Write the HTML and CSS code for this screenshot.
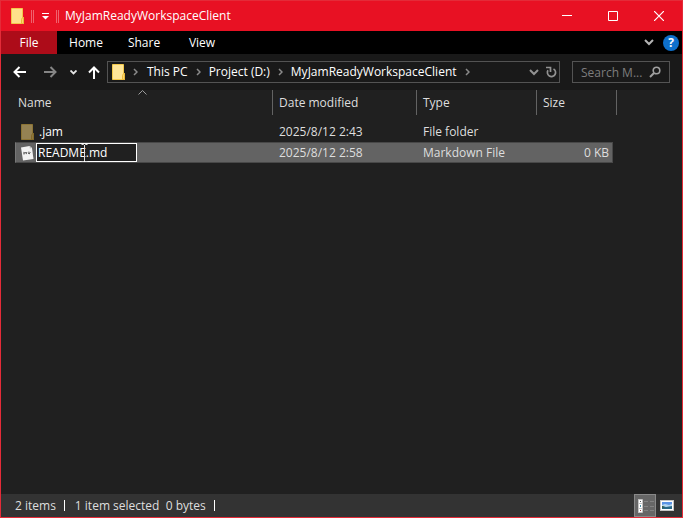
FILE: index.html
```html
<!DOCTYPE html>
<html lang="en">
<head>
<meta charset="utf-8">
<title>MyJamReadyWorkspaceClient</title>
<link rel="stylesheet" href="styles.css">
</head>
<body>
<div class="window">
  <header class="titlebar">
    <svg class="folder" width="14" height="16" viewBox="0 0 14 16" aria-hidden="true"><path d="M.5.5h11v9h1v6H.5z" fill="#ffe08a" stroke="#f3c94b"/><path d="M11.5 9.5h1v6h-2v-4z" fill="#ffd66a" stroke="#e9b93a"/></svg>
    <span class="grip"></span>
    <button class="quick" aria-label="Customize Quick Access Toolbar"><svg width="9" height="8" viewBox="0 0 9 8"><path d="M1 1.500h7" stroke="#fff"/><path d="M1 4h7L4.500 7.500z" fill="#fff"/></svg></button>
    <span class="grip"></span>
    <h1 class="title">MyJamReadyWorkspaceClient</h1>
    <div class="captions">
      <button class="caption" aria-label="Minimize"><svg width="10" height="10" viewBox="0 0 10 10"><path d="M0 4.500h10" stroke="#fff"/></svg></button>
      <button class="caption" aria-label="Maximize"><svg width="10" height="10" viewBox="0 0 10 10"><path d="M.5.5h9v9h-9z" fill="none" stroke="#fff"/></svg></button>
      <button class="caption" aria-label="Close"><svg width="10" height="10" viewBox="0 0 10 10"><path d="M0 0l10 10M10 0L0 10" stroke="#fff" stroke-width="1.200"/></svg></button>
    </div>
  </header>

  <nav class="ribbon">
    <button class="tab tab-file">File</button>
    <button class="tab">Home</button>
    <button class="tab">Share</button>
    <button class="tab">View</button>
    <div class="ribbon-tools">
      <button class="icon" aria-label="Expand the ribbon"><svg width="10" height="7" viewBox="0 0 10 7"><path d="M1 1l4 4 4-4" fill="none" stroke="#b4b4b4" stroke-width="2"/></svg></button>
      <button class="help" aria-label="Help">?</button>
    </div>
  </nav>

  <div class="navbar">
    <button class="icon arrow" aria-label="Back"><svg width="14" height="12" viewBox="0 0 14 12"><path d="M13 6H2M6.500 1l-5 5 5 5" fill="none" stroke="#fff" stroke-width="2"/></svg></button>
    <button class="icon arrow" aria-label="Forward"><svg width="14" height="12" viewBox="0 0 14 12"><path d="M1 6h11M7.500 1l5 5-5 5" fill="none" stroke="#858585" stroke-width="2"/></svg></button>
    <button class="icon recent" aria-label="Recent locations"><svg width="7" height="5" viewBox="0 0 7 5"><path d="M.5.5l3 3 3-3" fill="none" stroke="#e6e6e6" stroke-width="1.800"/></svg></button>
    <button class="icon up" aria-label="Up"><svg width="12" height="13" viewBox="0 0 12 13"><path d="M6 13V2M1 6.500l5-5 5 5" fill="none" stroke="#fff" stroke-width="2"/></svg></button>
    <div class="address">
      <svg class="folder" width="14" height="16" viewBox="0 0 14 16" aria-hidden="true"><path d="M.5.5h11v9h1v6H.5z" fill="#ffe699" stroke="#f3c94b"/><path d="M11.500 9.500h1v6h-2v-4z" fill="#ffd66a" stroke="#e9b93a"/></svg>
      <svg class="sep" width="5" height="8" viewBox="0 0 5 8"><path d="M1 1l3 3-3 3" fill="none" stroke="#8a8a8a" stroke-width="1.500"/></svg>
      <a href="#">This PC</a>
      <svg class="sep" width="5" height="8" viewBox="0 0 5 8"><path d="M1 1l3 3-3 3" fill="none" stroke="#8a8a8a" stroke-width="1.500"/></svg>
      <a href="#">Project (D:)</a>
      <svg class="sep" width="5" height="8" viewBox="0 0 5 8"><path d="M1 1l3 3-3 3" fill="none" stroke="#8a8a8a" stroke-width="1.500"/></svg>
      <a href="#">MyJamReadyWorkspaceClient</a>
      <svg class="sep" width="5" height="8" viewBox="0 0 5 8"><path d="M1 1l3 3-3 3" fill="none" stroke="#8a8a8a" stroke-width="1.500"/></svg>
      <div class="address-tools">
        <button class="icon" aria-label="Previous locations"><svg width="10" height="7" viewBox="0 0 10 7"><path d="M1 1l4 4 4-4" fill="none" stroke="#929292" stroke-width="2"/></svg></button>
        <button class="icon" aria-label="Refresh"><svg width="11" height="12" viewBox="0 0 11 12"><path d="M7.500 2.900a4.100 4.100 0 1 1-5.500 1.400" fill="none" stroke="#929292" stroke-width="1.700"/><path d="M0 1.500h4.500v4.500" fill="none" stroke="#929292" stroke-width="1.700"/></svg></button>
      </div>
    </div>
    <div class="search">
      <input type="text" placeholder="Search M..." aria-label="Search MyJamReadyWorkspaceClient">
      <svg width="12" height="12" viewBox="0 0 12 12" aria-hidden="true"><circle cx="7.500" cy="4.500" r="3.300" fill="none" stroke="#a0a0a0" stroke-width="1.600"/><path d="M5 7L1 11" stroke="#a0a0a0" stroke-width="1.900"/></svg>
    </div>
  </div>

  <main class="content">
    <table class="files">
      <colgroup><col class="c-name"><col class="c-date"><col class="c-type"><col class="c-size"><col class="c-edge"></colgroup>
      <thead>
        <tr>
          <th class="sorted">Name<svg class="sort" width="9" height="5" viewBox="0 0 9 5"><path d="M.5 4.500l4-4 4 4" fill="none" stroke="#9c9c9c"/></svg></th>
          <th>Date modified</th>
          <th>Type</th>
          <th colspan="2">Size</th>
        </tr>
      </thead>
      <tbody>
        <tr>
          <td><div class="file"><svg class="file-icon" width="14" height="16" viewBox="0 0 14 16" aria-hidden="true"><path d="M1.500.5h11v9h1v6h-12z" fill="#958253" stroke="#8c7434"/><path d="M12.500 9.500h1v6h-2v-4z" fill="#8d7740" stroke="#836a29"/></svg><span class="file-name">.jam</span></div></td>
          <td>2025/8/12 2:43</td>
          <td>File folder</td>
          <td class="size"></td>
          <td class="edge"></td>
        </tr>
        <tr class="selected">
          <td><div class="file"><svg class="file-icon" width="14" height="16" viewBox="0 0 14 16" aria-hidden="true"><path d="M1 2.500L9.500 1 12 3l1.500 11L3 15.500z" fill="#f2f2f2"/><path d="M9.500 1L12 3l-2.200.4z" fill="#bdbdbd"/><path d="M4 9.500l-.2-2.200 1.300 1 1.100-1.300.2 2.100M8.900 6.600l.3 2.200M7.800 7.700l1.400 1.200 1.200-1.500" fill="none" stroke="#555"/></svg><span class="rename"><input type="text" value="README.md" aria-label="File name"><svg class="ibeam" width="7" height="18" viewBox="0 0 7 18" aria-hidden="true"><path d="M.5.5h2l1 1 1-1h2M3.500 1v16M.5 17.500h2l1-1 1 1h2" fill="none" stroke="#dedede"/></svg></span></div></td>
          <td>2025/8/12 2:58</td>
          <td>Markdown File</td>
          <td class="size">0 KB</td>
          <td class="edge"></td>
        </tr>
      </tbody>
    </table>
  </main>

  <footer class="status">
    <span class="status-item">2 items</span>
    <span class="status-item">1 item selected&nbsp; 0 bytes</span>
    <div class="views">
      <button class="view view-on" aria-label="Details view"><svg width="18" height="14" viewBox="0 0 18 14"><path d="M2 .5h4v13H2z" fill="#fff"/><path d="M2.500.5h4v13h-4zM2 4.500h5M2 9.500h5" fill="none" stroke="#c4c4c4"/><path d="M4 2h1v1H4z" fill="#555"/><path d="M4 6h1v2H4z" fill="#4b91a8"/><path d="M4 11h1v1H4z" fill="#963b3b"/><path d="M8 2.500h4M14 2.500h4M8 7.500h4M14 7.500h4M8 11.500h4M14 11.500h4" stroke="#828282"/></svg></button>
      <button class="view" aria-label="Large icons view"><svg width="14" height="11" viewBox="0 0 14 11"><path d="M0 0h14v11H0z" fill="#c4c4c4"/><path d="M1 1h12v9H1z" fill="#fff"/><path d="M2 2h10v3H2z" fill="#5a93e5"/><path d="M2 5l3-1 4 1 3-1v3H2z" fill="#b4d6ef"/><path d="M2 6l4 1 6-1v3H2z" fill="#286887"/><path d="M2 6l3 1-3 1z" fill="#355942"/></svg></button>
    </div>
  </footer>
</div>
</body>
</html>
```
FILE: styles.css
```css
* { box-sizing: border-box; }

body {
  margin: 0;
  color: #fff;
  background: #202020;
  font: 12px/16px "Segoe UI", "Open Sans", "Noto Sans", sans-serif;
}

button, input {
  margin: 0;
  padding: 0;
  border: 0;
  background: none;
  color: inherit;
  font: inherit;
}

svg { display: block; flex: none; }

.window {
  display: flex;
  flex-direction: column;
  min-height: 100vh;
  border: 1px solid #e42b38;
}

.titlebar {
  display: flex;
  align-items: center;
  height: 30px;
  padding-left: 10px;
  background: #e81123;
}

.grip {
  width: 3px;
  height: 13px;
  margin-left: 6px;
  border: solid #f0626d;
  border-width: 0 1px;
}

.quick { margin-left: 7px; }

.title {
  margin: 0 0 0 6px;
  font-size: 12px;
  font-weight: 400;
}

.captions { display: flex; align-self: stretch; margin-left: auto; }

.caption {
  display: flex;
  align-items: center;
  justify-content: center;
  width: 46px;
}

.ribbon {
  display: flex;
  height: 23px;
  background: #000;
}

.tab { width: 58px; }
.tab-file { width: 56px; background: #ad0c19; }

.ribbon-tools {
  display: flex;
  align-items: center;
  gap: 9px;
  margin-left: auto;
  padding-right: 3px;
}

.help {
  width: 16px;
  height: 16px;
  border-radius: 50%;
  background: #0e70cb;
  font-weight: 700;
  text-align: center;
}

.navbar {
  display: flex;
  align-items: center;
  height: 36px;
  padding: 0 12px;
  background: #191919;
}

.arrow { margin-right: 16px; }
.recent { margin: 0 11px 0 -3px; }
.up { margin-right: 7px; }

.address {
  display: flex;
  flex: 1;
  align-items: center;
  height: 22px;
  padding-left: 4px;
  border: 1px solid #535353;
}

.address a { color: #fff; text-decoration: none; }
.sep { margin: 0 8px; }
.address .folder + .sep { margin: 0 9px 0 7px; }

.address-tools {
  display: flex;
  align-items: center;
  gap: 7px;
  margin-left: auto;
  padding-right: 2px;
}

.search {
  display: flex;
  align-items: center;
  width: 98px;
  height: 22px;
  margin-left: 12px;
  padding: 0 8px;
  border: 1px solid #535353;
}

.search input { flex: 1; min-width: 0; height: 20px; outline: 0; }
.search input::placeholder { color: #7d7d7d; opacity: 1; }

.content { flex: 1; padding-left: 14px; }

.files {
  table-layout: fixed;
  width: 602px;
  border-collapse: separate;
  border-spacing: 0;
}

.c-name { width: 258px; }
.c-date { width: 144px; }
.c-type { width: 120px; }
.c-size { width: 76px; }
.c-edge { width: 4px; }

.files th {
  height: 25px;
  padding: 0 6px;
  border-right: 1px solid #636363;
  color: #dedede;
  font-weight: 400;
  text-align: left;
}

.files th:first-child { padding-left: 3px; }
.sorted { position: relative; }
.sort { position: absolute; top: 0; left: 0; right: 2px; margin: 0 auto; }

.files tbody::before { content: ""; display: block; height: 6px; }

.files td {
  height: 21px;
  padding: 0 6px;
  border: solid transparent;
  border-width: 1px 0;
  color: #dedede;
  white-space: nowrap;
}

.files td:first-child { padding: 0 0 0 5px; color: #fff; }
.files .size { padding-right: 3px; text-align: right; }
.files .edge { padding: 0; }

.selected td { border-color: #484848; background: #636363; }
.selected td:first-child { border-left: 1px solid #777; padding-left: 4px; }
.selected .size { border-right: 1px solid #484848; }
.selected .edge { border-color: transparent; background: none; }

.file { display: flex; align-items: center; }
.file-icon { margin-right: 2px; }
.file-name { padding-left: 3px; }

.rename { position: relative; width: 101px; }

.rename input {
  display: block;
  width: 100%;
  height: 19px;
  padding: 0 1px;
  border: 1px solid #fff;
  background: #202020;
  outline: 0;
}

.ibeam { position: absolute; top: 1px; left: 45px; }

.status {
  display: flex;
  align-items: center;
  height: 23px;
  padding-left: 14px;
  background: #333;
  color: #dedede;
}

.status-item { display: flex; align-items: center; margin-right: 10px; }

.status-item::after {
  content: "";
  width: 1px;
  height: 11px;
  margin-left: 8px;
  background: #fff;
}

.views { display: flex; align-self: stretch; margin-left: auto; padding-right: 4px; }

.view {
  display: flex;
  align-items: center;
  justify-content: center;
  width: 22px;
}

.view-on { border: 1px solid #898989; background: #666; }
```
